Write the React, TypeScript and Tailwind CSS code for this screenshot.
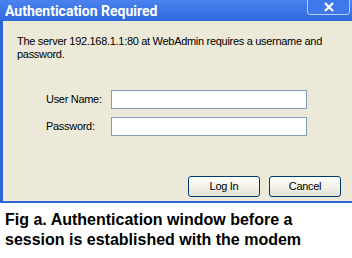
import React from "react";

export default function App() {
  const tahoma = { fontFamily: '"Liberation Sans", Arial, sans-serif' };
  return (
    <div className="w-[352px] h-[258px] bg-white overflow-hidden relative">
      <div className="w-[352px] h-[203px] flex flex-col">
        {/* title bar */}
        <div className="h-[21px] shrink-0 flex items-center bg-gradient-to-b from-[#4a83ee] to-[#2f68dc] pl-[5px] relative">
          <span
            className="text-white font-bold text-[14px] leading-none"
            style={{ fontFamily: '"Liberation Sans Narrow", Roboto, "Liberation Sans", sans-serif' }}
          >
            Authentication Required
          </span>
          <div className="absolute left-[307px] top-[-4px] w-[43px] h-[19px] rounded-[3px] border border-[#b8cdf5] bg-[#3f78ea] flex items-center justify-center pt-[3px]">
            <svg width="12" height="10" viewBox="0 0 12 10">
              <path d="M2 1 L10 9 M10 1 L2 9" stroke="white" strokeWidth="2.2" />
            </svg>
          </div>
        </div>
        {/* body */}
        <div className="flex-1 flex border-l-[3px] border-b-[2px] border-[#2f64d6] bg-[#ece9d8]">
          <div className="flex-1 flex flex-col pl-[14px] pt-[14px] text-[11px] tracking-[-0.3px] text-black whitespace-nowrap" style={tahoma}>
            <p className="leading-[13px]">The server 192.168.1.1:80 at WebAdmin requires a username and</p>
            <p className="leading-[13px]">password.</p>
            <div className="mt-[29px] flex items-center h-[19px]">
              <span className="w-[94px] pl-[29px] shrink-0">User Name:</span>
              <div className="w-[196px] h-[19px] bg-white border border-[#7f9db9]" />
            </div>
            <div className="mt-[8px] flex items-center h-[19px]">
              <span className="w-[94px] pl-[29px] shrink-0">Password:</span>
              <div className="w-[196px] h-[19px] bg-white border border-[#7f9db9]" />
            </div>
            <div className="mt-[40px] flex gap-[9px] pl-[171px]">
              <div className="w-[72px] h-[21px] rounded-[3px] border border-[#003c74] bg-gradient-to-b from-white to-[#e6e3d6] flex items-center justify-center">
                Log In
              </div>
              <div className="w-[72px] h-[21px] rounded-[3px] border border-[#003c74] bg-gradient-to-b from-white to-[#e6e3d6] flex items-center justify-center">
                Cancel
              </div>
            </div>
          </div>
        </div>
      </div>
      <div
        className="pl-[5px] pt-[7px] text-[16px] leading-[20px] font-bold text-black"
        style={{ fontFamily: '"Liberation Sans", Arial, sans-serif' }}
      >
        <div>Fig a. Authentication window before a</div>
        <div>session is established with the modem</div>
      </div>
    </div>
  );
}
